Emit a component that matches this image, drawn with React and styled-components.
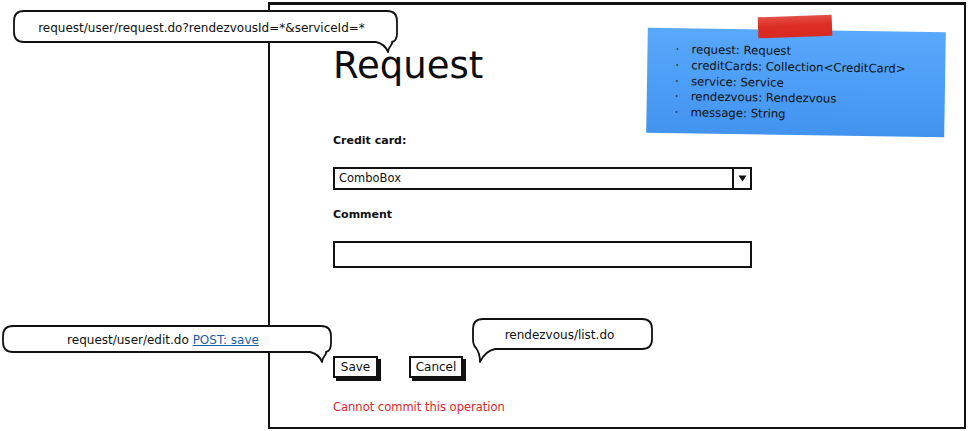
import styled, { createGlobalStyle } from 'styled-components';

const GlobalStyle = createGlobalStyle`
  html, body {
    margin: 0;
    padding: 0;
    background: #fff;
  }
  body {
    font-family: "DejaVu Sans", "Liberation Sans", sans-serif;
    color: #111;
  }
`;

const Canvas = styled.div`
  position: relative;
  width: 969px;
  height: 431px;
  overflow: hidden;
  box-sizing: border-box;
  padding: 2px 0 0 268px;
`;

/* the mocked-up browser window */
const Window = styled.div`
  position: relative;
  box-sizing: border-box;
  width: 698px;
  height: 427px;
  border: 2px solid #111;
  border-top-width: 3px;
  padding: 40px 0 0 63px;
  display: flex;
  flex-direction: column;
  align-items: flex-start;
`;

const Title = styled.h1`
  margin: 0;
  font-size: 37px;
  font-weight: 400;
  line-height: 42px;
  color: #0c0c0c;
`;

const Label = styled.div`
  margin-top: ${p => p.$mt}px;
  font-size: 11px;
  font-weight: 700;
  line-height: 14px;
`;

const Combo = styled.div`
  margin-top: 19.5px;
  box-sizing: border-box;
  width: 419px;
  height: 23px;
  border: 2px solid #111;
  display: flex;
  align-items: stretch;
`;

const ComboText = styled.div`
  flex: 1;
  padding-left: 4px;
  font-size: 11.5px;
  line-height: 19px;
`;

const ComboArrow = styled.div`
  width: 16px;
  border-left: 2px solid #111;
  display: flex;
  align-items: center;
  justify-content: center;
`;

const TextArea = styled.div`
  margin-top: 19px;
  box-sizing: border-box;
  width: 419px;
  height: 27px;
  border: 2px solid #111;
`;

const ButtonRow = styled.div`
  margin-top: 88px;
  display: flex;
  gap: 31px;
`;

const Button = styled.div`
  box-sizing: border-box;
  width: ${p => p.$w}px;
  height: 22px;
  border: 2px solid #111;
  box-shadow: 3px 3px 0 #111;
  background: #fff;
  font-size: 12px;
  line-height: 18px;
  text-align: center;
`;

const ErrorText = styled.div`
  margin-top: 21.5px;
  font-size: 11.5px;
  line-height: 15px;
  color: #e0262b;
`;

/* blue sticky note with a red strip of tape */
const Sticky = styled.div`
  position: absolute;
  left: 377px;
  top: 25px;
  width: 298px;
  height: 105px;
  box-sizing: border-box;
  padding: 14px 0 0 28px;
  background: linear-gradient(180deg, #58a8fb 0%, #4a9cf5 60%, #4193ee 100%);
  transform: rotate(0.9deg);
`;

const NoteList = styled.ul`
  margin: 0;
  padding: 0;
  list-style: none;
  font-size: 11.7px;
  line-height: 15.8px;
  color: #111;
`;

const NoteItem = styled.li`
  display: flex;
  &::before {
    content: "·";
    width: 16px;
    flex: none;
  }
`;

const Tape = styled.div`
  position: absolute;
  left: 488px;
  top: 11px;
  width: 74px;
  height: 21px;
  background: linear-gradient(180deg, #e35048 0%, #dc2e25 45%, #d8281f 100%);
  transform: rotate(-2deg);
`;

const Bubble = styled.div`
  position: absolute;
  left: ${p => p.$x}px;
  top: ${p => p.$y}px;
  width: ${p => p.$w}px;
  height: ${p => p.$h}px;
  display: flex;
  align-items: center;
  justify-content: center;
  padding: ${p => p.$pt || 0}px ${p => p.$pr || 0}px 0 0;
  box-sizing: border-box;
  font-size: 12px;
`;

const BubbleShape = styled.svg`
  position: absolute;
  left: 0;
  top: 0;
  overflow: visible;
`;

const BubbleText = styled.span`
  position: relative;
  white-space: nowrap;
`;

const Link = styled.span`
  color: #1d5ea9;
  text-decoration: underline;
`;

function bubblePath(w, h, tail) {
  const r = 10;
  const a = 1;
  const b = w - 1;
  const t = 1;
  const y = h - 1;
  if (tail === 'left') {
    return `M${a + r},${t} H${b - r} Q${b},${t} ${b},${t + r} V${y - r} Q${b},${y} ${b - r},${y}
      H${a + 22} Q${a + 12},${y + 2} ${a + 7},${y + 13} Q${a + 7},${y + 4} ${a + 3},${y - 1}
      Q${a},${y - 4} ${a},${y - r} V${t + r} Q${a},${t} ${a + r},${t} Z`;
  }
  return `M${a + r},${t} H${b - r} Q${b},${t} ${b},${t + r} V${y - 9} Q${b},${y - 1} ${b - 5},${y}
    C${b - 4},${y + 3} ${b - 8},${y + 3} ${b - 9},${y + 10} Q${b - 12},${y + 2} ${b - 21},${y}
    H${a + r} Q${a},${y} ${a},${y - r} V${t + r} Q${a},${t} ${a + r},${t} Z`;
}

const Callout = ({ x, y, w, h, tail, pr, pt, children }) => (
  <Bubble $x={x} $y={y} $w={w} $h={h} $pr={pr} $pt={pt}>
    <BubbleShape width={w} height={h}>
      <path d={bubblePath(w, h, tail)} fill="#fff" stroke="#111" strokeWidth="1.8" strokeLinejoin="round" />
    </BubbleShape>
    <BubbleText>{children}</BubbleText>
  </Bubble>
);

const fields = [
  'request: Request',
  'creditCards: Collection<CreditCard>',
  'service: Service',
  'rendezvous: Rendezvous',
  'message: String',
];

export default function App() {
  return (
    <>
      <GlobalStyle />
      <Canvas>
        <Window>
          <Title>Request</Title>
          <Label $mt={46.5}>Credit card:</Label>
          <Combo>
            <ComboText>ComboBox</ComboText>
            <ComboArrow>
              <svg width="9" height="7" viewBox="0 0 9 7">
                <path d="M0.5 0.5 H8.5 L4.5 6.5 Z" fill="#111" />
              </svg>
            </ComboArrow>
          </Combo>
          <Label $mt={18}>Comment</Label>
          <TextArea />
          <ButtonRow>
            <Button $w={45}>Save</Button>
            <Button $w={54}>Cancel</Button>
          </ButtonRow>
          <ErrorText>Cannot commit this operation</ErrorText>

          <Sticky>
            <NoteList>
              {fields.map(f => (
                <NoteItem key={f}>{f}</NoteItem>
              ))}
            </NoteList>
          </Sticky>
          <Tape />
        </Window>

        <Callout x={13} y={10} w={385} h={33} tail="right" pr={8} pt={3}>
          request/user/request.do?rendezvousId=*&amp;serviceId=*
        </Callout>
        <Callout x={2} y={325} w={330} h={28} tail="right" pr={8} pt={2}>
          request/user/edit.do <Link>POST: save</Link>
        </Callout>
        <Callout x={472} y={318} w={181} h={32} tail="left" pr={6} pt={2}>
          rendezvous/list.do
        </Callout>
      </Canvas>
    </>
  );
}
